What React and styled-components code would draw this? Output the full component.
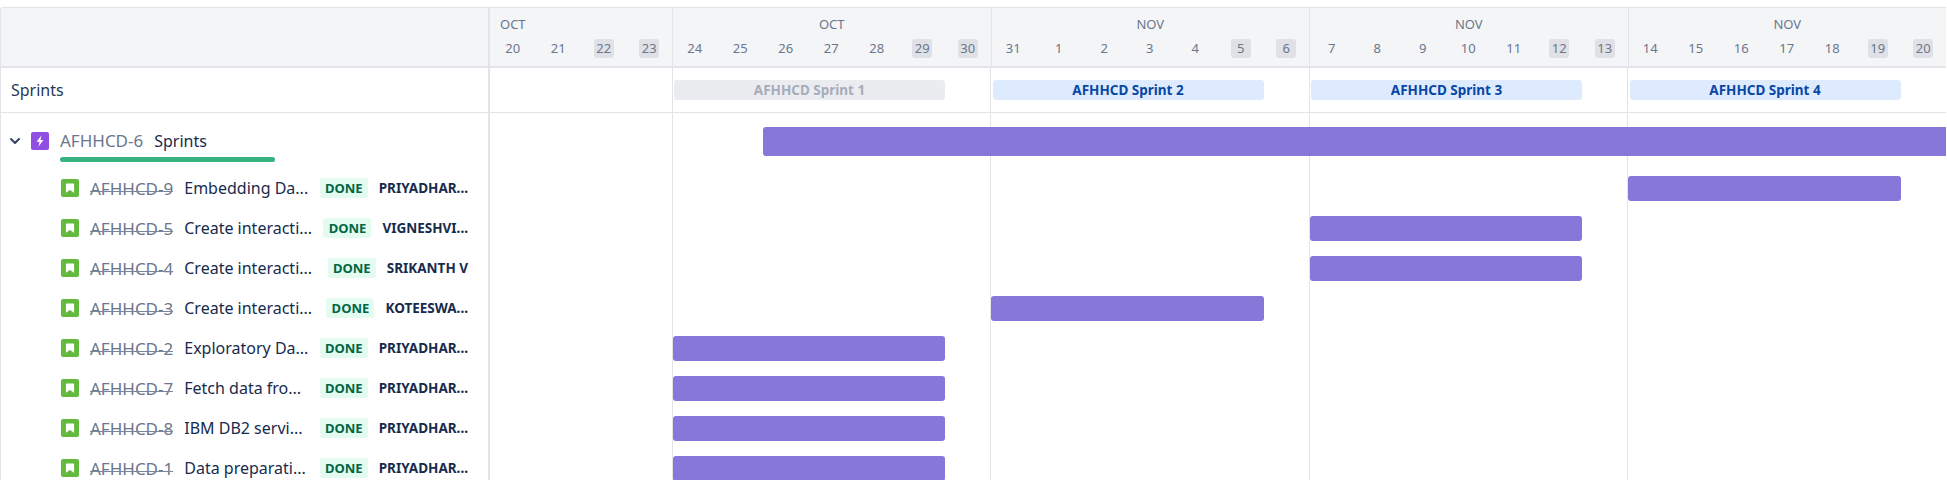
import React from "react";
import styled, { createGlobalStyle } from "styled-components";

const DAY = 45.5;
const LINE = "#e2e4e9";

const GlobalStyle = createGlobalStyle`
  html, body {
    margin: 0;
    height: 480px;
    overflow: hidden;
    background: #fff;
    font-family: "Noto Sans", "Open Sans", sans-serif;
    color: #172b4d;
  }
`;

const Board = styled.div`
  display: flex;
  width: 1947px;
  height: 473px;
  margin-top: 7px;
  overflow: hidden;
`;

const Panel = styled.div`
  flex: 0 0 490px;
  box-sizing: border-box;
  border-left: 1px solid ${LINE};
  border-right: 2px solid ${LINE};
  border-top-left-radius: 3px;
`;

const PanelHead = styled.div`
  box-sizing: border-box;
  height: 61px;
  background: #f4f5f7;
  border-top: 1px solid ${LINE};
  border-bottom: 2px solid ${LINE};
  border-top-left-radius: 3px;
`;

const SprintTitle = styled.div`
  box-sizing: border-box;
  height: 45px;
  padding-left: 10px;
  border-bottom: 1px solid ${LINE};
  display: flex;
  align-items: center;
  font-size: 16px;
  color: #253858;
`;

const EpicRow = styled.div`
  position: relative;
  display: flex;
  align-items: center;
  box-sizing: border-box;
  height: 55px;
  padding-left: 8px;
`;

const Chevron = styled.svg`
  width: 12px;
  height: 12px;
  margin-right: 10px;
  flex: none;
`;

const Progress = styled.div`
  position: absolute;
  left: 59px;
  top: 44px;
  width: 215px;
  height: 5px;
  border-radius: 3px;
  background: #36b37e;
`;

const IssueIcon = styled.svg`
  width: 18px;
  height: 18px;
  flex: none;
  margin-right: 11px;
`;

const Key = styled.span`
  position: relative;
  flex: none;
  font-size: 17px;
  color: #6b778c;
  margin-right: 11px;

  &::after {
    content: "";
    display: ${p => (p.$done ? "block" : "none")};
    position: absolute;
    left: 0;
    right: 0;
    top: 14px;
    height: 1.5px;
    background: #7a869a;
  }
`;

const Summary = styled.span`
  flex: 1;
  min-width: 0;
  font-size: 16px;
  white-space: nowrap;
  color: #172b4d;
`;

const StoryRow = styled.div`
  display: flex;
  align-items: center;
  height: 40px;
  padding: 0 20px 0 60px;
`;

const Status = styled.span`
  flex: none;
  width: 48px;
  height: 20px;
  line-height: 20px;
  text-align: center;
  border-radius: 3px;
  background: #e3fcef;
  color: #006644;
  font-size: 13px;
  font-weight: 700;
  margin-right: 11px;
`;

const Assignee = styled.span`
  flex: none;
  font-size: 13.5px;
  font-weight: 700;
  color: #172b4d;
  white-space: nowrap;
`;

const Timeline = styled.div`
  flex: 1;
  min-width: 0;
  overflow: hidden;
`;

const TimeHead = styled.div`
  box-sizing: border-box;
  display: flex;
  width: max-content;
  height: 61px;
  background: #f4f5f7;
  border-top: 1px solid ${LINE};
  border-bottom: 2px solid ${LINE};
`;

const MonthGroup = styled.div`
  box-sizing: border-box;
  width: ${p => p.$days * DAY}px;
  border-left: ${p => (p.$first ? "none" : `1px solid ${LINE}`)};
`;

const Month = styled.div`
  height: 31px;
  line-height: 33px;
  font-size: 13px;
  color: #6b778c;
  text-align: ${p => (p.$first ? "left" : "center")};
  padding-left: ${p => (p.$first ? "10px" : "0")};
`;

const Days = styled.div`
  display: flex;
  margin-left: ${p => (p.$first ? "0" : "-1px")};
`;

const DayCell = styled.div`
  flex: 0 0 ${DAY}px;
  display: flex;
  justify-content: center;
`;

const DayNum = styled.span`
  width: 20px;
  height: 19px;
  line-height: 19px;
  border-radius: 3px;
  text-align: center;
  font-size: 13px;
  color: #6b778c;
  background: ${p => (p.$weekend ? "#dfe1e6" : "transparent")};
`;

const Chart = styled.div`
  width: ${DAY * 32}px;
  background-image: repeating-linear-gradient(
    to right,
    ${LINE} 0,
    ${LINE} 1px,
    transparent 1px,
    transparent ${DAY * 7}px
  );
  background-position: ${DAY * 4 - 0.5}px 0;
  background-repeat: no-repeat;
`;

const Track = styled.div`
  display: grid;
  grid-template-columns: repeat(32, ${DAY}px);
  align-items: start;
  box-sizing: border-box;
`;

const SprintTrack = styled(Track)`
  height: 45px;
  padding-top: 12px;
  border-bottom: 1px solid ${LINE};
`;

const SprintChip = styled.div`
  grid-column: ${p => p.$start + 1} / span 6;
  margin-left: 2px;
  width: 271px;
  height: 20px;
  line-height: 20px;
  border-radius: 3px;
  text-align: center;
  font-size: 13.5px;
  font-weight: 700;
  background: ${p => (p.$closed ? "#ebecf0" : "#deebff")};
  color: ${p => (p.$closed ? "#a5adba" : "#0747a6")};
`;

const BarTrack = styled(Track)`
  height: ${p => (p.$epic ? 55 : 40)}px;
  padding-top: ${p => (p.$epic ? 14 : 8)}px;
`;

const Bar = styled.div`
  grid-column: ${p => p.$start + 1} / ${p => (p.$open ? "-1" : `span ${p.$span}`)};
  height: ${p => (p.$epic ? 29 : 25)}px;
  margin-left: ${p => (p.$epic ? 0 : 0.5)}px;
  background: #8777d9;
  border-radius: ${p => (p.$open ? "3px 0 0 3px" : "3px")};
`;

const months = [
  { label: "OCT", first: true, days: [20, 21, 22, 23], weekend: [22, 23] },
  { label: "OCT", days: [24, 25, 26, 27, 28, 29, 30], weekend: [29, 30] },
  { label: "NOV", days: [31, 1, 2, 3, 4, 5, 6], weekend: [5, 6] },
  { label: "NOV", days: [7, 8, 9, 10, 11, 12, 13], weekend: [12, 13] },
  { label: "NOV", days: [14, 15, 16, 17, 18, 19, 20], weekend: [19, 20] },
];

const sprints = [
  { name: "AFHHCD Sprint 1", start: 4, closed: true },
  { name: "AFHHCD Sprint 2", start: 11 },
  { name: "AFHHCD Sprint 3", start: 18 },
  { name: "AFHHCD Sprint 4", start: 25 },
];

const stories = [
  { id: "AFHHCD-9", title: "Embedding Da...", who: "PRIYADHAR...", start: 25 },
  { id: "AFHHCD-5", title: "Create interacti...", who: "VIGNESHVI...", start: 18 },
  { id: "AFHHCD-4", title: "Create interacti...", who: "SRIKANTH V", start: 18 },
  { id: "AFHHCD-3", title: "Create interacti...", who: "KOTEESWA...", start: 11 },
  { id: "AFHHCD-2", title: "Exploratory Da...", who: "PRIYADHAR...", start: 4 },
  { id: "AFHHCD-7", title: "Fetch data fro...", who: "PRIYADHAR...", start: 4 },
  { id: "AFHHCD-8", title: "IBM DB2 servi...", who: "PRIYADHAR...", start: 4 },
  { id: "AFHHCD-1", title: "Data preparati...", who: "PRIYADHAR...", start: 4 },
];

const EpicIcon = () => (
  <IssueIcon viewBox="0 0 18 18">
    <rect width="18" height="18" rx="2" fill="#904ee2" />
    <path d="M10.4 3.6 5.6 9.8h2.9l-1 4.6 4.9-6.4H9.5z" fill="#fff" />
  </IssueIcon>
);

const StoryIcon = () => (
  <IssueIcon viewBox="0 0 18 18">
    <rect width="18" height="18" rx="2" fill="#63ba3c" />
    <path d="M5.5 4.5h7a.6.6 0 0 1 .6.6v8.6L9 11l-4.1 2.7V5.1a.6.6 0 0 1 .6-.6z" fill="#fff" />
  </IssueIcon>
);

const App = () => (
  <>
    <GlobalStyle />
    <Board>
      <Panel>
        <PanelHead />
        <SprintTitle>Sprints</SprintTitle>
        <EpicRow>
          <Chevron viewBox="0 0 12 12">
            <path d="M2 4l4 4 4-4" fill="none" stroke="#344563" strokeWidth="2" strokeLinecap="round" strokeLinejoin="round" />
          </Chevron>
          <EpicIcon />
          <Key>AFHHCD-6</Key>
          <Summary>Sprints</Summary>
          <Progress />
        </EpicRow>
        {stories.map(s => (
          <StoryRow key={s.id}>
            <StoryIcon />
            <Key $done>{s.id}</Key>
            <Summary>{s.title}</Summary>
            <Status>DONE</Status>
            <Assignee>{s.who}</Assignee>
          </StoryRow>
        ))}
      </Panel>
      <Timeline>
        <TimeHead>
          {months.map((m, i) => (
            <MonthGroup key={i} $days={m.days.length} $first={m.first}>
              <Month $first={m.first}>{m.label}</Month>
              <Days $first={m.first}>
                {m.days.map(d => (
                  <DayCell key={d}>
                    <DayNum $weekend={m.weekend.includes(d)}>{d}</DayNum>
                  </DayCell>
                ))}
              </Days>
            </MonthGroup>
          ))}
        </TimeHead>
        <Chart>
          <SprintTrack>
            {sprints.map(s => (
              <SprintChip key={s.name} $start={s.start} $closed={s.closed}>
                {s.name}
              </SprintChip>
            ))}
          </SprintTrack>
          <BarTrack $epic>
            <Bar $epic $start={6} $open />
          </BarTrack>
          {stories.map(s => (
            <BarTrack key={s.id}>
              <Bar $start={s.start} $span={6} />
            </BarTrack>
          ))}
        </Chart>
      </Timeline>
    </Board>
  </>
);

export default App;
